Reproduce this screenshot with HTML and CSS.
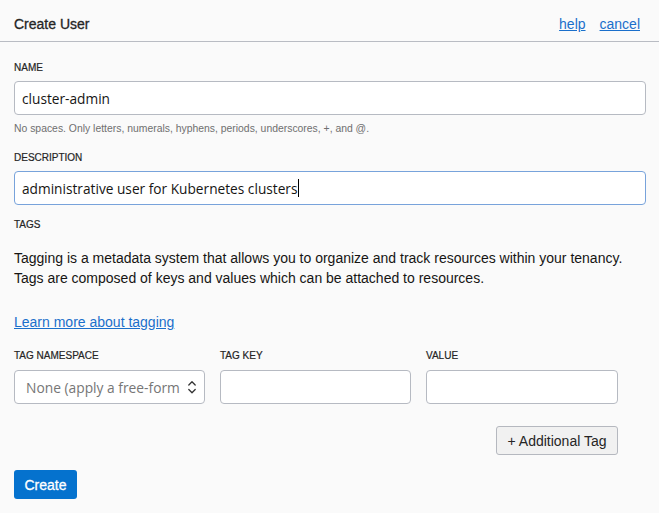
FILE: index.html
```html
<!DOCTYPE html>
<html>
<head>
<meta charset="utf-8">
<link rel="stylesheet" href="styles.css">
</head>
<body>
<div class="panel">
  <header class="head">
    <h1 class="title">Create User</h1>
    <nav class="head-links">
      <a href="#" class="link">help</a>
      <a href="#" class="link">cancel</a>
    </nav>
  </header>
  <main class="content">
    <label class="label lbl-name">NAME</label>
    <input class="field" type="text" value="cluster-admin">
    <p class="hint">No spaces. Only letters, numerals, hyphens, periods, underscores, +, and @.</p>

    <label class="label lbl-desc">DESCRIPTION</label>
    <div class="field field-focus"><span class="val">administrative user for Kubernetes clusters</span><span class="caret"></span></div>

    <div class="label lbl-tags">TAGS</div>
    <p class="para">Tagging is a metadata system that allows you to organize and track resources within your tenancy. Tags are composed of keys and values which can be attached to resources.</p>
    <a href="#" class="link learn">Learn more about tagging</a>

    <div class="tags">
      <div class="tag-row">
        <div class="col">
          <label class="label">TAG NAMESPACE</label>
          <div class="select-wrap">
            <div class="field select"><span class="ph">None (apply a free-form</span></div>
            <svg class="chev" width="10" height="14" viewBox="0 0 10 14"><path d="M1.8 5 L5 1.8 L8.2 5 M1.8 9.5 L5 12.7 L8.2 9.5" fill="none" stroke="#333" stroke-width="1.3" stroke-linecap="round" stroke-linejoin="round"/></svg>
          </div>
        </div>
        <div class="col">
          <label class="label">TAG KEY</label>
          <input class="field" type="text">
        </div>
        <div class="col">
          <label class="label">VALUE</label>
          <input class="field" type="text">
        </div>
      </div>
      <div class="add-row"><button class="btn-sec">+ Additional Tag</button></div>
    </div>

    <button class="btn-pri">Create</button>
  </main>
</div>
</body>
</html>
```

FILE: styles.css
```css
html, body {
  margin: 0;
  padding: 0;
  background: #fafafa;
}
body {
  font-family: "Liberation Sans", Arial, sans-serif;
  color: #161513;
  width: 659px;
  height: 513px;
  overflow: hidden;
}
.panel {
  display: flex;
  flex-direction: column;
}
.head {
  border-bottom: 1px solid #b9bcc3;
  display: flex;
  align-items: center;
  justify-content: space-between;
  padding: 6px 19px 0 14px;
  box-sizing: border-box;
  height: 42px;
}
.title {
  margin: 0;
  font-size: 14px;
  font-weight: normal;
  color: #252525;
  -webkit-text-stroke: 0.3px #252525;
}
.head-links {
  display: flex;
  gap: 14px;
}
.link {
  color: #1a6fcb;
  text-decoration: underline;
  font-size: 14px;
}
.content {
  display: flex;
  flex-direction: column;
  align-items: flex-start;
  padding: 19px 13px 0 14px;
}
.label {
  display: block;
  font-size: 10px;
  line-height: 14px;
  color: #252525;
  -webkit-text-stroke: 0.2px #252525;
  margin-bottom: 6px;
}
.field {
  box-sizing: border-box;
  width: 632px;
  height: 34px;
  border: 1px solid #b6bac2;
  border-radius: 4px;
  background: #fff;
  padding: 0 7px;
  font-family: "Open Sans", "Noto Sans", sans-serif;
  font-size: 13.7px;
  color: #161513;
  outline: none;
  margin: 0;
  display: flex;
  align-items: center;
}
.field-focus {
  border-color: #78a3db;
}
.caret {
  display: inline-block;
  width: 1px;
  height: 18px;
  background: #000;
  margin-left: 1px;
}
.hint {
  margin: 7px 0 0;
  font-size: 10.4px;
  line-height: 14px;
  color: #6f6f6f;
}
.lbl-desc {
  margin-top: 15px;
}
.lbl-tags {
  margin-top: 13px;
  margin-bottom: 0;
}
.para {
  margin: 16px 0 0;
  font-size: 14px;
  line-height: 20px;
  color: #161513;
}
.learn {
  margin-top: 24px;
  line-height: 20px;
}
.tags {
  margin-top: 17px;
  width: 604px;
  display: flex;
  flex-direction: column;
}
.tag-row {
  display: grid;
  grid-template-columns: 191px 191px 192px;
  gap: 15px;
}
.col .label {
  margin-bottom: 7px;
}
.col .field {
  width: 100%;
}
.select-wrap {
  position: relative;
}
.select {
  padding: 0 20px 0 11px;
}
.ph {
  color: #767676;
  font-size: 13.8px;
  white-space: nowrap;
}
.chev {
  position: absolute;
  right: 8px;
  top: 10px;
}
.add-row {
  display: flex;
  justify-content: flex-end;
  margin-top: 22px;
}
.btn-sec {
  height: 29px;
  width: 122px;
  border: 1px solid #b5b8bf;
  border-radius: 3px;
  background: #f1f1f1;
  font-family: "Liberation Sans", Arial, sans-serif;
  font-size: 14px;
  color: #252525;
  padding: 0;
}
.btn-pri {
  margin-top: 15px;
  height: 29px;
  width: 63px;
  border: none;
  border-radius: 3px;
  background: #0572ce;
  color: #fff;
  font-family: "Liberation Sans", Arial, sans-serif;
  font-size: 14px;
  -webkit-text-stroke: 0.3px #fff;
  padding: 0;
}
```
